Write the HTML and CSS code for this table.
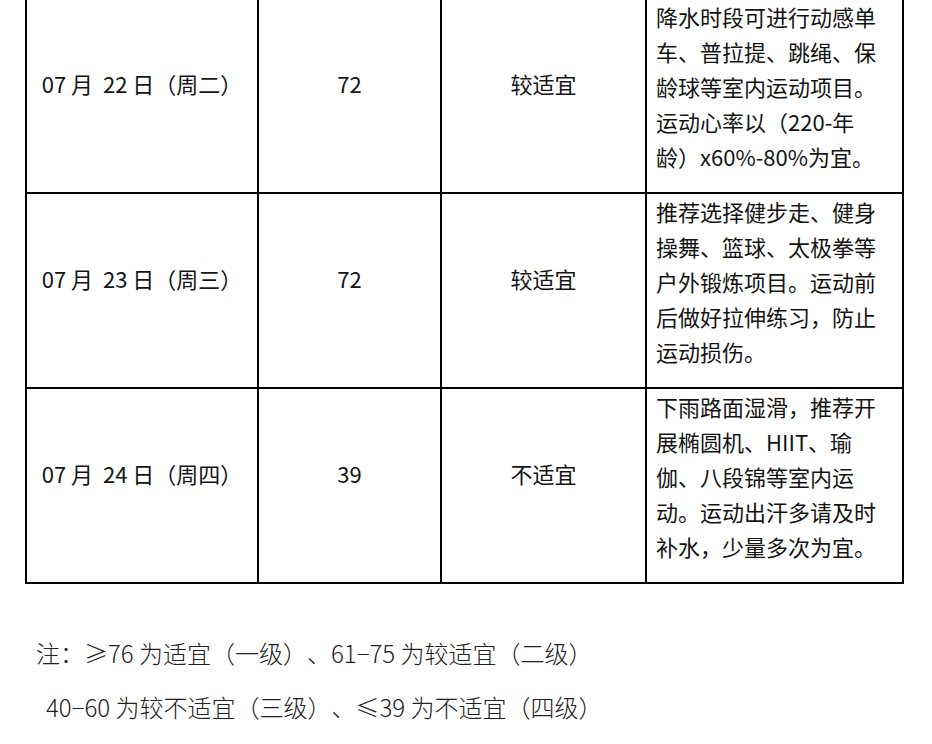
FILE: index.html
```html
<!DOCTYPE html>
<html lang="zh-CN">
<head>
<meta charset="utf-8">
<title>运动指数</title>
<link rel="stylesheet" href="styles.css">
</head>
<body>
<table class="sport-table">
  <colgroup>
    <col class="c-date">
    <col class="c-score">
    <col class="c-level">
    <col class="c-advice">
  </colgroup>
  <tbody>
    <tr>
      <td class="date">07 月 &nbsp;22 日（周二）</td>
      <td class="score">72</td>
      <td class="level">较适宜</td>
      <td class="advice">降水时段可进行动感单车、普拉提、跳绳、保龄球等室内运动项目。运动心率以（220-年龄）x60%-80%为宜。</td>
    </tr>
    <tr>
      <td class="date">07 月 &nbsp;23 日（周三）</td>
      <td class="score">72</td>
      <td class="level">较适宜</td>
      <td class="advice">推荐选择健步走、健身操舞、篮球、太极拳等户外锻炼项目。运动前后做好拉伸练习，防止运动损伤。</td>
    </tr>
    <tr>
      <td class="date">07 月 &nbsp;24 日（周四）</td>
      <td class="score">39</td>
      <td class="level">不适宜</td>
      <td class="advice">下雨路面湿滑，推荐开展椭圆机、HIIT、瑜伽、八段锦等室内运动。运动出汗多请及时补水，少量多次为宜。</td>
    </tr>
  </tbody>
</table>
<div class="note">
  <p class="note-line">注：≥76 为适宜（一级）、61−75 为较适宜（二级）</p>
  <p class="note-line indent">40−60 为较不适宜（三级）、≤39 为不适宜（四级）</p>
</div>
</body>
</html>
```
FILE: styles.css
```css
html, body {
  margin: 0;
  padding: 0;
  background: #ffffff;
}

body {
  font-family: "Noto Sans CJK SC", "Noto Sans", sans-serif;
  color: #141414;
  text-spacing-trim: space-all;
}

.sport-table {
  margin: -3px 0 0 25px;
  border-collapse: separate;
  border-spacing: 0;
  table-layout: fixed;
  width: 879px;
  border-left: 2px solid #000;
  border-top: 2px solid #000;
}

.c-date { width: 232px; }
.c-score { width: 183px; }
.c-level { width: 205px; }
.c-advice { width: 257px; }

.sport-table td {
  border-right: 2px solid #000;
  border-bottom: 2px solid #000;
  font-size: 22px;
  line-height: 35px;
  height: 168px;
  padding: 0 0 25px 0;
  vertical-align: middle;
  text-align: center;
}

.sport-table td.date {
  white-space: nowrap;
}

.sport-table td.advice {
  text-align: left;
  height: 175px;
  padding: 0 20px 18px 9px;
}

.note {
  padding: 42px 0 0 36px;
}

.note-line {
  margin: 0;
  font-size: 24px;
  line-height: 54px;
  font-weight: 300;
  color: #222;
}

.note-line.indent {
  padding-left: 10px;
}
```
